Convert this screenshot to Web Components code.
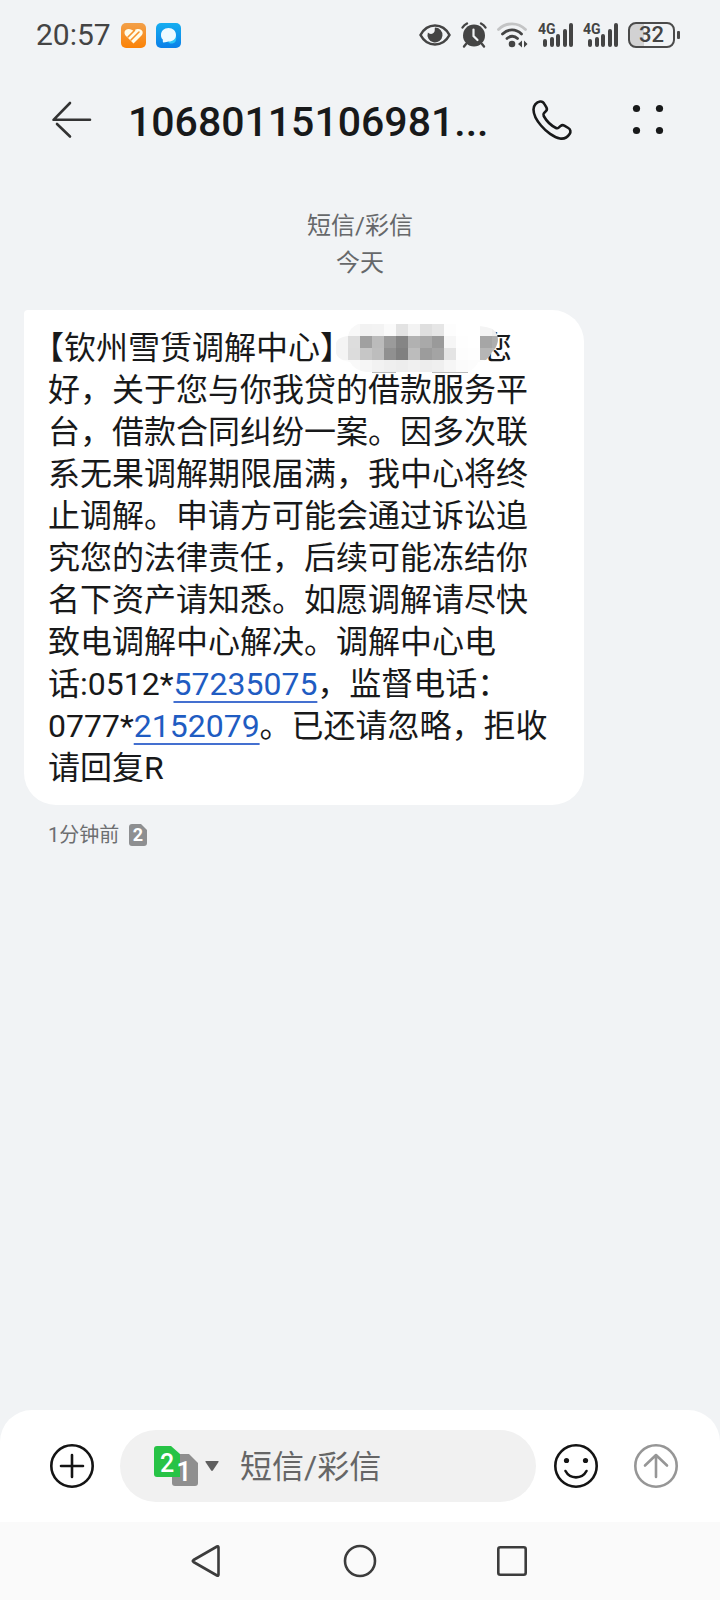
<!DOCTYPE html>
<html lang="zh-CN">
<head>
<meta charset="utf-8">
<meta name="viewport" content="width=device-width, initial-scale=1">
<title>短信/彩信</title>
<style>
    html, body {
        height: 100%;
        margin: 0;
    }
    body {
        font-family: Roboto, "Noto Sans CJK SC", sans-serif;
        color: #18191a;
    }
</style>
</head>
<body>

<sms-screen>
    <status-bar slot="top" time="20:57" battery="32"></status-bar>
    <chat-header slot="top">10680115106981...</chat-header>

    <day-label>
        <span>短信/彩信</span>
        <span slot="day">今天</span>
    </day-label>
    <message-bubble sim="2">
        <half-mark>【</half-mark>钦州雪赁调解中心<half-mark>】</half-mark><masked-name></masked-name>您<br>
        好，关于您与你我贷的借款服务平<br>
        台，借款合同纠纷一案。因多次联<br>
        系无果调解期限届满，我中心将终<br>
        止调解。申请方可能会通过诉讼追<br>
        究您的法律责任，后续可能冻结你<br>
        名下资产请知悉。如愿调解请尽快<br>
        致电调解中心解决。调解中心电<br>
        话:0512*<phone-link>57235075</phone-link>，监督电话：<br>
        0777*<phone-link>2152079</phone-link>。已还请忽略，拒收<br>
        请回复R
        <span slot="time">1分钟前</span>
    </message-bubble>

    <message-composer slot="bottom" placeholder="短信/彩信"></message-composer>
    <nav-bar slot="bottom"></nav-bar>
</sms-screen>

<script>
const buttonStyle = `
    button {
        all: unset;
        cursor: pointer;
        display: flex;
        align-items: center;
        justify-content: center;
    }
    button:focus-visible {
        outline: 2px solid #1f5fc8;
    }
    svg {
        display: block;
        overflow: visible;
    }
`;

class SmsScreen extends HTMLElement {
    constructor() {
        super();
        this.attachShadow({mode: 'open'}).innerHTML = `<style>
            :host {
                display: flex;
                flex-direction: column;
                min-height: 100vh;
                background: #f1f3f5;
            }
            main {
                flex: 1;
                padding: 38px 24px;
            }
        </style>
        <slot name="top"></slot>
        <main><slot></slot></main>
        <slot name="bottom"></slot>`;
    }
}

class StatusBar extends HTMLElement {
    connectedCallback() {
        if (!this.shadowRoot) {
            this.attachShadow({mode: 'open'});
        }
        const signal = `<svg width="35" height="26" viewBox="0 0 35 26" fill="#444">
            <text x="0" y="12" font-size="14" font-weight="700">4G</text>
            <rect x="5" y="17" width="4" height="8" rx="2"/>
            <rect x="12" y="15" width="4" height="10" rx="2"/>
            <rect x="18" y="12" width="4" height="13" rx="2"/>
            <rect x="25" y="7" width="4" height="18" rx="2"/>
            <rect x="31" y="1" width="4" height="24" rx="2"/>
        </svg>`;
        this.shadowRoot.innerHTML = `<style>
            :host {
                display: flex;
                align-items: center;
                justify-content: space-between;
                height: 70px;
                padding: 0 40px 0 36px;
                color: #444;
            }
            .group {
                display: flex;
                align-items: center;
                gap: 10px;
            }
            time {
                font-size: 30px;
                line-height: 36px;
            }
            .battery {
                display: flex;
                align-items: center;
                gap: 2px;
                width: 52px;
            }
            .level {
                box-sizing: border-box;
                width: 47px;
                height: 26px;
                border: 2px solid #4b4b4b;
                border-radius: 8px;
                background: linear-gradient(90deg, #d2d2d3 32%, transparent 32%);
                font-size: 22px;
                font-weight: 500;
                line-height: 22px;
                text-align: center;
            }
            .tip {
                width: 3px;
                height: 8px;
                border-radius: 1px;
                background: #4b4b4b;
            }
            svg {
                display: block;
                overflow: visible;
            }
        </style>
        <div class="group">
            <time>${this.getAttribute('time')}</time>
            <svg width="25" height="25" viewBox="0 0 25 25">
                <defs><linearGradient id="orange" x2="0" y2="1"><stop stop-color="#f2a04a"/><stop offset="1" stop-color="#fb8206"/></linearGradient></defs>
                <rect width="25" height="25" rx="5" fill="url(#orange)"/>
                <path d="M12.500 20.500L4.500 12.500C2.500 10 3.500 6 7.500 6C10 6 11.500 7 12.500 8C14 6.500 15.500 6 17.500 6C21.500 6 23 10 20.500 12.500Z" fill="#fffbe8"/>
                <path d="M7 14L13.500 7.500M10 17L18 9" fill="none" stroke="#f79129" stroke-width="1.600" stroke-linecap="round"/>
            </svg>
            <svg width="25" height="25" viewBox="0 0 25 25">
                <defs><linearGradient id="blue" x2="0" y2="1"><stop stop-color="#16aef0"/><stop offset="1" stop-color="#0b7fe8"/></linearGradient></defs>
                <rect width="25" height="25" rx="5" fill="url(#blue)"/>
                <path d="M14 20.500C19 21 21 18 20 13L12 19Z" fill="#2bc4f7"/>
                <path d="M12.500 5C17 5 20 8 20 12C20 16 17 18.500 12.500 18.500C11 18.500 10 19.500 7.500 19.500C6.500 19.500 7 18 6.800 16.500C5.200 15 5 13.500 5 12C5 8 8 5 12.500 5Z" fill="#eefaff"/>
            </svg>
        </div>
        <div class="group">
            <svg width="32" height="24" viewBox="0 0 32 24">
                <path d="M1.500 12C5 5.500 10 2.500 16 2.500S27 5.500 30.500 12C27 18.500 22 21.500 16 21.500S5 18.500 1.500 12Z" fill="none" stroke="#444" stroke-width="2.600" stroke-linejoin="round"/>
                <path d="M16 4.500A7.500 7.500 0 1 1 8.900 9.600C10.500 11.500 14.500 11.500 15.500 8.500C16 7 15.500 5.500 16 4.500Z" fill="#444"/>
            </svg>
            <svg width="26" height="26" viewBox="0 0 26 26" stroke="#444" stroke-linecap="round" fill="none">
                <circle cx="13" cy="13.500" r="11" fill="#444" stroke="none"/>
                <path d="M1.500 5.500Q3 3 6 1.500M24.500 5.500Q23 3 20 1.500M5 22L3 24.500M21 22L23 24.500" stroke-width="2.400"/>
                <path d="M12.500 7.500V14L16.500 18" stroke="#f1f3f5" stroke-width="2.200"/>
            </svg>
            <svg width="31" height="26" viewBox="0 0 31 26" fill="none" stroke="#444" stroke-width="2.800" stroke-linecap="round">
                <path d="M1.500 7.500C9 0 21 0 28.500 7.500" stroke="#c3c4c5"/>
                <path d="M5.500 12C11 6.500 19 6.500 24.500 12M10 16.500C13 13.500 17.500 13.500 20.500 16.500"/>
                <circle cx="15" cy="22" r="3.300" fill="#444" stroke="none"/>
                <path d="M21 22L25 18.500V25.500ZM27 18.500V25.500L30.500 22Z" fill="#444" stroke="none"/>
            </svg>
            ${signal}
            ${signal}
            <div class="battery"><div class="level">${this.getAttribute('battery')}</div><div class="tip"></div></div>
        </div>`;
    }
}

class ChatHeader extends HTMLElement {
    constructor() {
        super();
        this.attachShadow({mode: 'open'}).innerHTML = `<style>
            ${buttonStyle}
            :host {
                display: flex;
                align-items: center;
                height: 100px;
                padding: 0 52px;
            }
            h1 {
                flex: 1;
                min-width: 0;
                margin: 0 36px;
                padding-top: 4px;
                overflow: hidden;
                font-size: 41px;
                font-weight: 500;
                line-height: 52px;
                white-space: nowrap;
                text-overflow: ellipsis;
            }
            .actions {
                display: flex;
                gap: 56px;
            }
        </style>
        <button type="button" aria-label="返回">
            <svg width="40" height="40" viewBox="0 0 40 40" fill="none" stroke="#333" stroke-width="2.600" stroke-linecap="round" stroke-linejoin="round">
                <path d="M18 3L1.500 19.800H38M5 24L18 36.500"/>
            </svg>
        </button>
        <h1><slot></slot></h1>
        <div class="actions">
            <button type="button" aria-label="拨打电话">
                <svg width="40" height="40" viewBox="0 0 40 40" fill="none" stroke="#18191a" stroke-width="2.600" stroke-linejoin="round">
                    <path d="M8 1.500C10 1.200 11.500 2.300 12.300 3.800L14.400 7.300C15.200 8.800 14.900 10.200 13.900 11.200L12 13.200C11.200 14.100 11.200 15 11.700 16C14.200 20.500 19 25.500 24 28C25 28.500 25.800 28.400 26.700 27.600L28.600 25.900C29.700 25 31 24.900 32.300 25.600L36.300 28C38.600 29.400 39 31.800 37.600 34C35.500 37.200 32 39.200 28 38.500C22 37.500 14 31.500 9 25.500C5 20.800 1.500 14 1.500 9.500C1.500 5.500 4.500 2 8 1.500Z"/>
                </svg>
            </button>
            <button type="button" aria-label="更多">
                <svg width="40" height="40" viewBox="0 0 40 40" fill="#18191a">
                    <circle cx="8.500" cy="8.500" r="3.600"/>
                    <circle cx="31.500" cy="8.500" r="3.600"/>
                    <circle cx="8.500" cy="30.500" r="3.600"/>
                    <circle cx="31.500" cy="30.500" r="3.600"/>
                </svg>
            </button>
        </div>`;
    }
}

class DayLabel extends HTMLElement {
    constructor() {
        super();
        this.attachShadow({mode: 'open'}).innerHTML = `<style>
            :host {
                display: block;
                margin-bottom: 28px;
                color: #66686a;
                font-size: 24px;
                line-height: 37px;
                text-align: center;
            }
        </style>
        <div><slot></slot></div>
        <div><slot name="day"></slot></div>`;
    }
}

class MessageBubble extends HTMLElement {
    constructor() {
        super();
        this.attachShadow({mode: 'open'}).innerHTML = `<style>
            :host {
                display: block;
            }
            .bubble {
                box-sizing: border-box;
                width: 560px;
                max-width: 100%;
                padding: 17px 24px 16px;
                border-radius: 4px 32px 32px 32px;
                background: #fff;
                font-size: 32px;
                line-height: 42px;
            }
            .meta {
                display: flex;
                align-items: center;
                gap: 10px;
                padding: 16px 24px;
                color: #6c6e70;
                font-size: 20px;
                line-height: 28px;
            }
            svg {
                display: block;
            }
        </style>
        <div class="bubble"><slot></slot></div>
        <div class="meta">
            <slot name="time"></slot>
            <svg width="18" height="22" viewBox="0 0 18 22">
                <path d="M3 0H12L18 6V19Q18 22 15 22H3Q0 22 0 19V3Q0 0 3 0Z" fill="#8e8f91"/>
                <text x="9" y="17" text-anchor="middle" font-size="18" font-weight="700" fill="#fff">${this.getAttribute('sim')}</text>
            </svg>
        </div>`;
    }
}

// full-width brackets set on half an em
class HalfMark extends HTMLElement {
    constructor() {
        super();
        this.attachShadow({mode: 'open'}).innerHTML = `<style>
            :host {
                font-feature-settings: "halt";
            }
        </style><slot></slot>`;
    }
}

class PhoneLink extends HTMLElement {
    connectedCallback() {
        if (!this.shadowRoot) {
            this.attachShadow({mode: 'open'});
        }
        this.shadowRoot.innerHTML = `<style>
            a {
                color: #1f5cc2;
                text-decoration: underline 2px #4470d0;
                text-underline-offset: 6px;
                text-decoration-skip-ink: none;
            }
        </style><a href="tel:${this.textContent}"><slot></slot></a>`;
    }
}

// grey levels of the 12px tiles, one row per line
const TILES = [
    ['ff', 'f8', 'f2', 'f3', 'fa', 'e3', 'f3', 'df', 'e6', 'fd', 'ff', 'ff', 'f4', 'ee'],
    ['f4', 'dd', 'a0', 'bb', '9b', '85', 'b1', 'a9', '9a', 'f6', 'fe', 'ff', 'a6', 'ae'],
    ['f4', 'dc', 'c6', 'bd', '90', '80', 'bc', '9c', 'a4', 'e4', 'fd', 'fe', 'b6', 'ba'],
    ['fb', 'f9', 'f6', 'f2', 'ef', 'ed', 'f0', 'ed', 'ef', 'f6', 'fb', 'fc', 'fd', 'ff']
];

class MaskedName extends HTMLElement {
    constructor() {
        super();
        const rects = TILES.map((row, y) => row.map((level, x) =>
            `<rect x="${x * 12}" y="${y * 12}" width="12" height="12" fill="#${level.repeat(3)}"/>`
        ).join('')).join('');
        this.attachShadow({mode: 'open'}).innerHTML = `<style>
            :host {
                display: inline-block;
                position: relative;
                width: 144px;
                height: 42px;
                vertical-align: top;
            }
            svg {
                display: block;
                overflow: visible;
            }
        </style>
        <svg width="144" height="42" viewBox="0 3 144 42" shape-rendering="crispEdges">
            <defs><clipPath id="blob">
                <path d="M22 0H138Q144 3 150 3Q162 5 162 16Q161 24 156 28Q152 38 142 38Q140 44 132 48H30Q18 46 14 38Q-1 36 -1 24Q-1 13 12 12Q14 3 22 0Z"/>
            </clipPath></defs>
            <g clip-path="url(#blob)">${rects}</g>
            <path d="M36 48.500H60M96 48.500H132" stroke="#b9b9b9"/>
        </svg>`;
    }
}

class MessageComposer extends HTMLElement {
    connectedCallback() {
        if (!this.shadowRoot) {
            this.attachShadow({mode: 'open'});
        }
        this.shadowRoot.innerHTML = `<style>
            ${buttonStyle}
            :host {
                display: flex;
                align-items: center;
                padding: 20px 42px 20px 50px;
                border-radius: 32px 32px 0 0;
                background: #fff;
            }
            .field {
                display: flex;
                flex: 1;
                align-items: center;
                gap: 21px;
                min-width: 0;
                height: 72px;
                margin: 0 18px 0 26px;
                padding: 0 34px;
                box-sizing: border-box;
                border-radius: 36px;
                background: #f1f1f1;
            }
            .sim {
                flex: none;
                gap: 7px;
            }
            input {
                flex: 1;
                min-width: 0;
                padding: 2px 0 0;
                border: 0;
                outline: 0;
                background: none;
                color: inherit;
                font: inherit;
                font-size: 32px;
                line-height: 44px;
            }
            input::placeholder {
                color: #666;
                opacity: 1;
            }
            .actions {
                display: flex;
                gap: 36px;
            }
        </style>
        <button type="button" aria-label="添加附件">
            <svg width="44" height="44" viewBox="0 0 44 44" fill="none" stroke="#141414" stroke-width="2.600" stroke-linecap="round">
                <circle cx="22" cy="22" r="20.700"/>
                <path d="M22 11V33M11 22H33"/>
            </svg>
        </button>
        <div class="field">
            <button type="button" class="sim" aria-haspopup="menu" aria-label="选择SIM卡">
                <svg width="44" height="40" viewBox="0 0 44 40" font-weight="500" fill="#fff">
                    <path d="M21 8H35L44 17V37Q44 40 41 40H21Q18 40 18 37V11Q18 8 21 8Z" fill="#8f8f8f"/>
                    <path d="M3 0H17L26 8V31H3Q0 31 0 28V3Q0 0 3 0Z" fill="#27c346"/>
                    <text x="13" y="26" text-anchor="middle" font-size="25">2</text>
                    <text x="30" y="35" text-anchor="middle" font-size="27">1</text>
                </svg>
                <svg width="14" height="10" viewBox="0 0 14 10"><path d="M1 0H13Q14 0 13.500 1L8 9.300Q7 10.500 6 9.300L.5 1Q0 0 1 0Z" fill="#5f5f5f"/></svg>
            </button>
            <input type="text" aria-label="短信内容" placeholder="${this.getAttribute('placeholder')}">
        </div>
        <div class="actions">
            <button type="button" aria-label="表情">
                <svg width="44" height="44" viewBox="0 0 44 44" fill="none" stroke="#141414" stroke-width="2.600" stroke-linecap="round">
                    <circle cx="22" cy="22" r="20.700"/>
                    <path d="M11.500 27C16 35.500 28 35.500 32.500 27"/>
                    <circle cx="12.500" cy="16.500" r="2.600" fill="#141414" stroke="none"/>
                    <circle cx="31.500" cy="16.500" r="2.600" fill="#141414" stroke="none"/>
                </svg>
            </button>
            <button type="button" aria-label="发送">
                <svg width="44" height="44" viewBox="0 0 44 44" fill="none" stroke="#969696" stroke-width="2.600" stroke-linecap="round" stroke-linejoin="round">
                    <circle cx="22" cy="22" r="20.700"/>
                    <path d="M22 33V11.500M11 21.500L22 11L33 21.500"/>
                </svg>
            </button>
        </div>`;
    }
}

class NavBar extends HTMLElement {
    constructor() {
        super();
        this.attachShadow({mode: 'open'}).innerHTML = `<style>
            ${buttonStyle}
            :host {
                display: flex;
                align-items: center;
                justify-content: center;
                gap: 112px;
                height: 78px;
                background: #fafafa;
            }
        </style>
        <button type="button" aria-label="后退">
            <svg width="40" height="40" viewBox="0 0 40 40" fill="none" stroke="#3c3c3c" stroke-width="2.600" stroke-linejoin="round">
                <path d="M29 5.500Q30.500 4.700 30.500 6.500V33.500Q30.500 35.300 29 34.500L5.500 21Q4 20 5.500 19Z"/>
            </svg>
        </button>
        <button type="button" aria-label="主屏幕">
            <svg width="40" height="40" viewBox="0 0 40 40" fill="none" stroke="#3c3c3c" stroke-width="2.600"><circle cx="20" cy="20" r="15"/></svg>
        </button>
        <button type="button" aria-label="最近任务">
            <svg width="40" height="40" viewBox="0 0 40 40" fill="none" stroke="#3c3c3c" stroke-width="2.600"><rect x="6.300" y="6.300" width="27.400" height="27.400" rx="2"/></svg>
        </button>`;
    }
}

customElements.define('sms-screen', SmsScreen);
customElements.define('status-bar', StatusBar);
customElements.define('chat-header', ChatHeader);
customElements.define('day-label', DayLabel);
customElements.define('message-bubble', MessageBubble);
customElements.define('half-mark', HalfMark);
customElements.define('phone-link', PhoneLink);
customElements.define('masked-name', MaskedName);
customElements.define('message-composer', MessageComposer);
customElements.define('nav-bar', NavBar);
</script>
</body>
</html>
